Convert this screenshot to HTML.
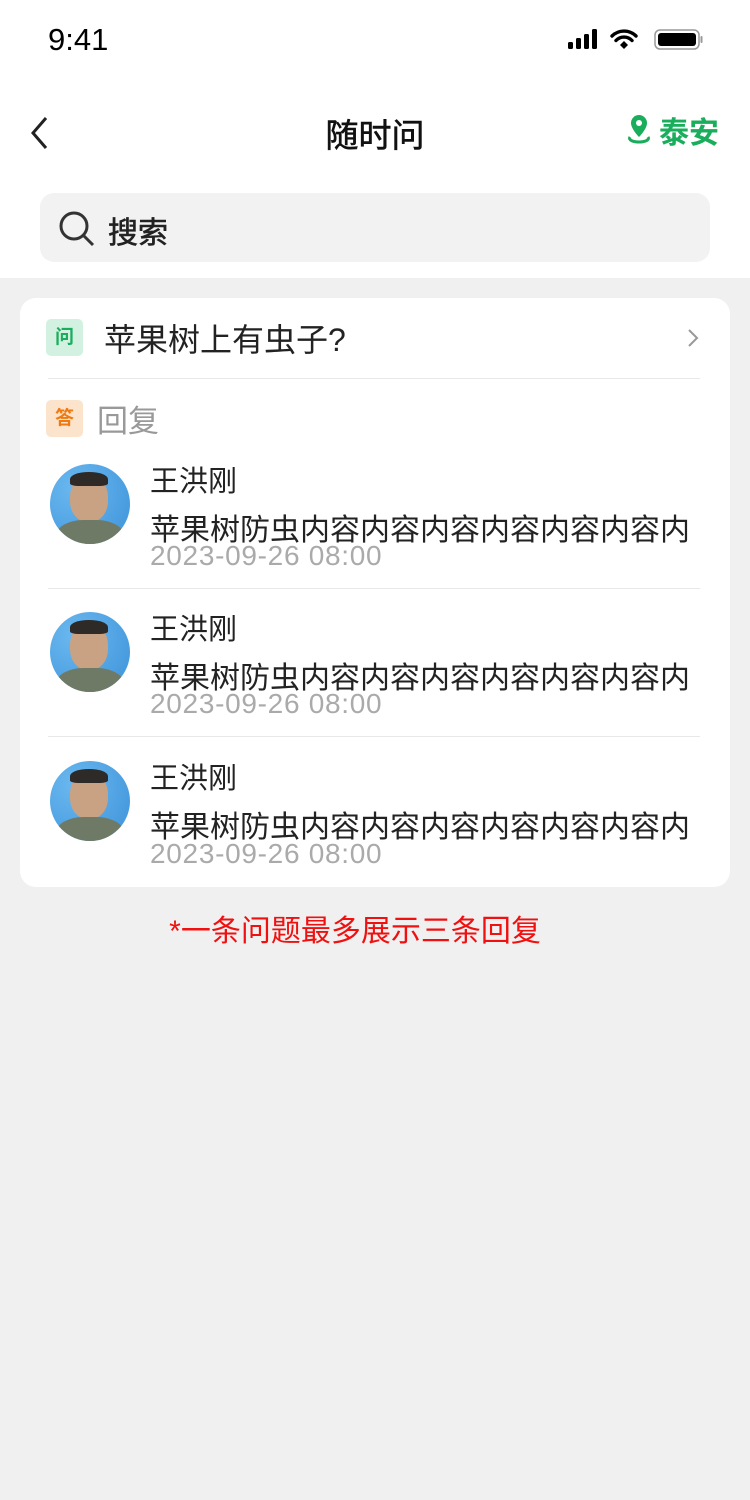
<!DOCTYPE html>
<html><head><meta charset="utf-8"><style>
*{margin:0;padding:0;box-sizing:border-box}
body{width:750px;height:1500px;background:#f0f0f0;font-family:"Liberation Sans","Noto Sans CJK SC",sans-serif;position:relative;overflow:hidden;color:#222}
.top{position:absolute;left:0;top:0;width:750px;height:278px;background:#fff}
.abs{position:absolute;white-space:nowrap}
.card{position:absolute;left:20px;top:298px;width:710px;height:589px;background:#fff;border-radius:16px}
.badge{position:absolute;width:37px;height:37px;border-radius:5px;font-size:19px;font-weight:bold;text-align:center;line-height:37px}
.av{position:absolute;width:80px;height:80px;border-radius:50%;overflow:hidden;background:radial-gradient(circle at 30% 30%,#6ab8f0,#3c92d8)}
.name{font-size:29px;color:#222}
.ct{font-size:30px;color:#222}
.dt{font-size:28px;color:#aaa;letter-spacing:0.7px}
.hr{position:absolute;left:28px;width:652px;height:1px;background:#e8e8e8}
</style></head><body>
<div class="top"></div>
<div class="abs" style="left:48px;top:22px;font-size:31px;color:#000">9:41</div>
<svg class="abs" style="left:566px;top:28px" width="138" height="24" viewBox="0 0 138 24">
<rect x="2" y="14" width="5" height="7" rx="1.5"/><rect x="10" y="10" width="5" height="11" rx="1.5"/><rect x="18" y="6" width="5" height="15" rx="1.5"/><rect x="26" y="1" width="5" height="20" rx="1.5"/>
<path d="M46 8a17 17 0 0 1 24 0" stroke="#000" stroke-width="3.4" fill="none" stroke-linecap="round"/>
<path d="M50 12.5a11 11 0 0 1 16 0" stroke="#000" stroke-width="3.4" fill="none" stroke-linecap="round"/>
<path d="M54 17l4-4 4 4-4 4z"/>
<rect x="89" y="2" width="44" height="19" rx="5" fill="none" stroke="#999" stroke-width="1.5"/>
<rect x="92" y="5" width="38" height="13" rx="3"/><rect x="134.5" y="8" width="2" height="7" rx="1" fill="#999"/>
</svg>
<svg class="abs" style="left:28px;top:115px" width="24" height="36" viewBox="0 0 24 36"><path d="M18 3L5 18l13 15" stroke="#222" stroke-width="3" fill="none"/></svg>
<div class="abs" style="left:0;width:750px;text-align:center;top:109px;font-size:33px;color:#111;-webkit-text-stroke:0.6px #111">随时问</div>
<svg class="abs" style="left:626px;top:113px" width="26" height="32" viewBox="0 0 26 32"><path d="M13 2a8 8 0 0 0-8 8c0 6 8 14 8 14s8-8 8-14a8 8 0 0 0-8-8z" fill="#1aad5c"/><circle cx="13" cy="10" r="3" fill="#fff"/><path d="M4 24c-2 3 3 5 9 5s11-2 9-5" stroke="#1aad5c" stroke-width="3" fill="none"/></svg>
<div class="abs" style="left:659px;top:108px;font-size:30px;font-weight:bold;color:#1aad5c">泰安</div>
<div class="abs" style="left:40px;top:193px;width:670px;height:69px;background:#f2f2f2;border-radius:14px"></div>
<svg class="abs" style="left:58px;top:210px" width="38" height="38" viewBox="0 0 38 38"><circle cx="16" cy="16" r="13" stroke="#333" stroke-width="3" fill="none"/><path d="M26 26l9 9" stroke="#333" stroke-width="3"/></svg>
<div class="abs" style="left:108px;top:208px;font-size:30px;color:#222;-webkit-text-stroke:0.6px #222">搜索</div>

<div class="card">
<div class="badge" style="left:26px;top:21px;background:#d3f1e1;color:#1aad5c">问</div>
<div class="abs" style="left:84px;top:17px;font-size:32px">苹果树上有虫子?</div>
<svg class="abs" style="left:666px;top:30px" width="14" height="20" viewBox="0 0 14 20"><path d="M3 2l8 8-8 8" stroke="#999" stroke-width="2" fill="none"/></svg>
<div class="hr" style="top:80px"></div>
<div class="badge" style="left:26px;top:102px;background:#fbe3cc;color:#f07a12">答</div>
<div class="abs" style="left:77px;top:98px;font-size:31px;color:#999">回复</div>

<div class="av" style="left:30px;top:166px"><div style="position:absolute;left:20px;top:12px;width:38px;height:46px;border-radius:45%;background:#c9a283"></div><div style="position:absolute;left:20px;top:8px;width:38px;height:14px;border-radius:50% 50% 20% 20%;background:#2d2a28"></div><div style="position:absolute;left:6px;top:56px;width:68px;height:40px;border-radius:40% 40% 0 0;background:#6f7a66"></div></div>
<div class="abs name" style="left:130px;top:160px">王洪刚</div>
<div class="abs ct" style="left:130px;top:207px">苹果树防虫内容内容内容内容内容内容内</div>
<div class="abs dt" style="left:130px;top:242px">2023-09-26 08:00</div>
<div class="hr" style="top:290px"></div>

<div class="av" style="left:30px;top:314px"><div style="position:absolute;left:20px;top:12px;width:38px;height:46px;border-radius:45%;background:#c9a283"></div><div style="position:absolute;left:20px;top:8px;width:38px;height:14px;border-radius:50% 50% 20% 20%;background:#2d2a28"></div><div style="position:absolute;left:6px;top:56px;width:68px;height:40px;border-radius:40% 40% 0 0;background:#6f7a66"></div></div>
<div class="abs name" style="left:130px;top:308px">王洪刚</div>
<div class="abs ct" style="left:130px;top:355px">苹果树防虫内容内容内容内容内容内容内</div>
<div class="abs dt" style="left:130px;top:390px">2023-09-26 08:00</div>
<div class="hr" style="top:438px"></div>

<div class="av" style="left:30px;top:463px"><div style="position:absolute;left:20px;top:12px;width:38px;height:46px;border-radius:45%;background:#c9a283"></div><div style="position:absolute;left:20px;top:8px;width:38px;height:14px;border-radius:50% 50% 20% 20%;background:#2d2a28"></div><div style="position:absolute;left:6px;top:56px;width:68px;height:40px;border-radius:40% 40% 0 0;background:#6f7a66"></div></div>
<div class="abs name" style="left:130px;top:457px">王洪刚</div>
<div class="abs ct" style="left:130px;top:504px">苹果树防虫内容内容内容内容内容内容内</div>
<div class="abs dt" style="left:130px;top:540px">2023-09-26 08:00</div>
</div>
<div class="abs" style="left:0;width:710px;text-align:center;top:906px;font-size:30px;color:#f01010">*一条问题最多展示三条回复</div>
</body></html>
